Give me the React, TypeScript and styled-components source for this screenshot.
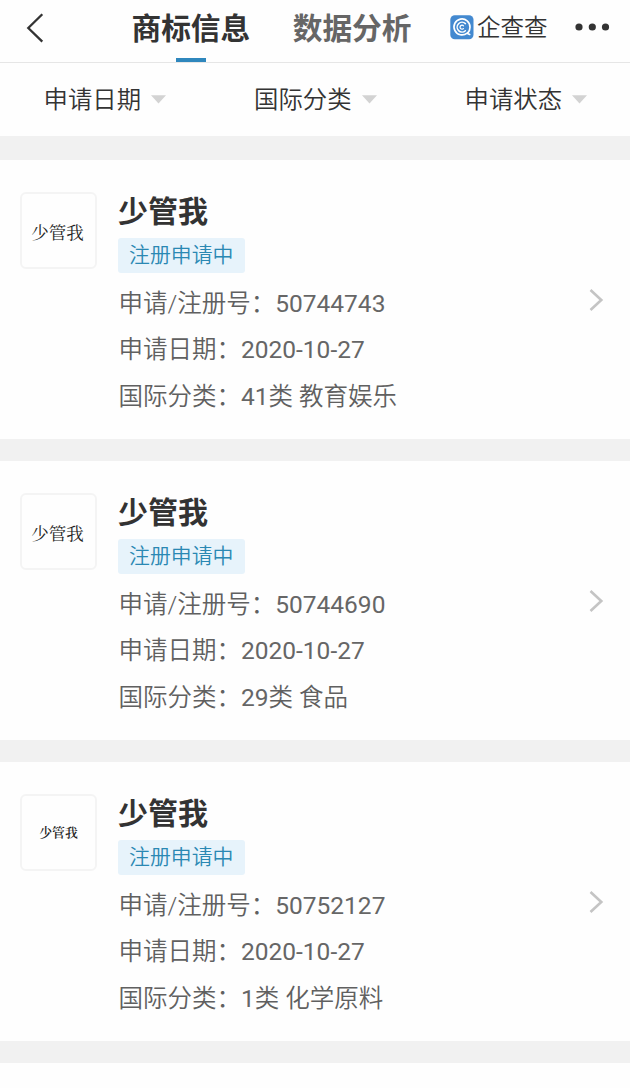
import React from "react";
import styled, { createGlobalStyle } from "styled-components";

const GlobalStyle = createGlobalStyle`
  * { box-sizing: border-box; }
  body {
    margin: 0;
    background: #fff;
    font-family: Roboto, "Noto Sans CJK SC", sans-serif;
    font-weight: 350;
    color: #333;
  }
`;

const Page = styled.div`
  width: 630px;
  height: 1088px;
  overflow: hidden;
  background: #fefefe;
`;

const Header = styled.header`
  display: flex;
  height: 63px;
  border-bottom: 1px solid #e6e6e6;
`;

const BackIcon = styled.svg`
  width: 18px;
  height: 30px;
  margin: 13px 0 0 26px;
`;

const Tabs = styled.nav`
  display: flex;
  gap: 42.5px;
  margin-left: 87.5px;
`;

const Tab = styled.div<{ $active?: boolean }>`
  display: flex;
  flex-direction: column;
  justify-content: space-between;
  align-items: center;
  height: 62px;
  font-size: 29.7px;
  font-weight: 700;
  white-space: nowrap;
  color: ${(p) => (p.$active ? "#333" : "#666")};
`;

const TabLabel = styled.span`
  height: 57px;
  line-height: 58px;
`;

const TabBar = styled.i`
  width: 30px;
  height: 4px;
  background: #2f87bd;
`;

const Brand = styled.div`
  display: flex;
  margin-left: 38px;
`;

const BrandIcon = styled.svg`
  width: 24px;
  height: 25px;
  margin-top: 15px;
`;

const BrandName = styled.span`
  margin-left: 3.5px;
  font-size: 23.5px;
  line-height: 57px;
  white-space: nowrap;
`;

const MoreIcon = styled.svg`
  width: 36px;
  height: 8px;
  margin: 23px 0 0 27px;
`;

const Filters = styled.div`
  display: flex;
  height: 73px;
  padding-left: 43.5px;
`;

const Filter = styled.div`
  display: flex;
  width: 210.5px;
  flex-shrink: 0;
  font-size: 24.4px;
  line-height: 73px;
  white-space: nowrap;
`;

const Caret = styled.svg`
  width: 15px;
  height: 9px;
  margin: 32px 0 0 10px;
`;

const Band = styled.div<{ $height: number }>`
  height: ${(p) => p.$height}px;
  background: #f1f1f1;
`;

const Card = styled.article`
  display: flex;
  height: 279px;
  padding: 32px 25px 0 20px;
`;

const Thumb = styled.div<{ $small?: boolean }>`
  display: flex;
  justify-content: center;
  width: 77px;
  height: 77px;
  padding-right: ${(p) => (p.$small ? 0 : 2)}px;
  border: 2px solid #f4f4f4;
  border-radius: 6px;
  font-family: "Noto Serif CJK SC", "Noto Sans CJK SC", serif;
  font-size: ${(p) => (p.$small ? 12.8 : 17.5)}px;
  font-weight: ${(p) => (p.$small ? 600 : 400)};
  line-height: ${(p) => (p.$small ? 71 : 76)}px;
  color: #222;
  white-space: nowrap;
`;

const Info = styled.div`
  flex: 1;
  margin-left: 21px;
`;

const Title = styled.h2`
  margin: 0;
  height: 46px;
  font-size: 30px;
  line-height: 40px;
  font-weight: 700;
`;

const Tag = styled.span`
  display: block;
  width: 127px;
  height: 35px;
  padding-left: 11px;
  border-radius: 3px;
  background: #e7f3fb;
  color: #2a88b3;
  font-size: 20.9px;
  line-height: 35px;
  white-space: nowrap;
`;

const Details = styled.div`
  margin-top: 8px;
`;

const Detail = styled.div`
  height: 46.4px;
  padding-left: 0.5px;
  font-size: 24.5px;
  line-height: 46px;
  color: #606060;
  white-space: nowrap;
`;

const Digits = styled.span`
  font-weight: 400;
  color: #666;
`;

const Chevron = styled.svg`
  width: 16px;
  height: 24px;
  margin-top: 96px;
`;

const filters = ["申请日期", "国际分类", "申请状态"];

const marks = [
  { id: "50744743", classNo: 41, className: "教育娱乐", small: false },
  { id: "50744690", classNo: 29, className: "食品", small: false },
  { id: "50752127", classNo: 1, className: "化学原料", small: true },
];

export default function App() {
  return (
    <Page>
      <GlobalStyle />
      <Header>
        <BackIcon viewBox="0 0 18 30" fill="none" stroke="#333" strokeWidth="2.3">
          <path d="M16.3 1.2 2.3 15l14 13.6" />
        </BackIcon>
        <Tabs>
          <Tab $active>
            <TabLabel>商标信息</TabLabel>
            <TabBar />
          </Tab>
          <Tab>
            <TabLabel>数据分析</TabLabel>
          </Tab>
        </Tabs>
        <Brand>
          <BrandIcon viewBox="0 0 24 25" fill="none">
            <rect x="0.3" y="0.3" width="23.2" height="24" rx="4.5" fill="#4389d0" />
            <g stroke="#fff" strokeLinecap="round">
              <path d="M17.1 18.1A8 8 0 1 1 20 12.2c0 2.5-1 4.7-2.5 6.2l2.2 1" strokeWidth="1.7" />
              <path d="M15.4 8.6a4.9 4.9 0 1 0 0 7.2" strokeWidth="1.5" />
              <path d="M13.5 10.8a2 2 0 1 0 0 2.8" strokeWidth="1.2" />
            </g>
          </BrandIcon>
          <BrandName>企查查</BrandName>
        </Brand>
        <MoreIcon viewBox="0 0 36 8" fill="#333">
          <circle cx="4" cy="4" r="3.6" />
          <circle cx="17.3" cy="4" r="3.6" />
          <circle cx="30.5" cy="4" r="3.6" />
        </MoreIcon>
      </Header>
      <Filters>
        {filters.map((name) => (
          <Filter key={name}>
            {name}
            <Caret viewBox="0 0 15 9" fill="#d3d3d3">
              <path d="M0 .3h15L7.5 8.5z" />
            </Caret>
          </Filter>
        ))}
      </Filters>
      <Band $height={24} />
      {marks.map((mark) => (
        <React.Fragment key={mark.id}>
          <Card>
            <Thumb $small={mark.small}>少管我</Thumb>
            <Info>
              <Title>少管我</Title>
              <Tag>注册申请中</Tag>
              <Details>
                <Detail>
                  申请/注册号：<Digits>{mark.id}</Digits>
                </Detail>
                <Detail>
                  申请日期：<Digits>2020-10-27</Digits>
                </Detail>
                <Detail>
                  国际分类：<Digits>{mark.classNo}</Digits>类 {mark.className}
                </Detail>
              </Details>
            </Info>
            <Chevron viewBox="0 0 16 24" fill="none" stroke="#c4c4c4" strokeWidth="2.6">
              <path d="M1.5 2 12.3 12 1.5 22" />
            </Chevron>
          </Card>
          <Band $height={22} />
        </React.Fragment>
      ))}
    </Page>
  );
}
